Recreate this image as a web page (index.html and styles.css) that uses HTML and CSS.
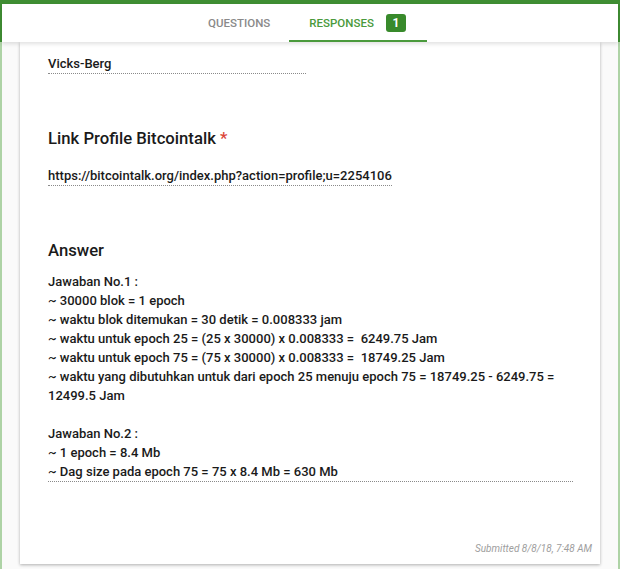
FILE: index.html
```html
<!DOCTYPE html>
<html lang="en">
<head>
  <meta charset="UTF-8" />
  <title>Responses</title>
  <link rel="stylesheet" href="styles.css">
</head>
<body>
  <div class="frame">
    <div class="topbar">
      <div class="tabs">
        <div class="tab">Questions</div>
        <div class="tab active">Responses <span class="badge">1</span></div>
      </div>
    </div>

    <div class="content">
      <div class="card">
        <div class="item first">
          <div class="answer">Vicks-Berg</div>
        </div>

        <div class="item">
          <h2>Link Profile Bitcointalk <span class="req">*</span></h2>
          <div class="answer">https://bitcointalk.org/index.php?action=profile;u=2254106</div>
        </div>

        <div class="item">
          <h2 class="tight">Answer</h2>
          <div class="answer long">Jawaban No.1 :<br>
~ 30000 blok = 1 epoch<br>
~ waktu blok ditemukan = 30 detik = 0.008333 jam<br>
~ waktu untuk epoch 25 = (25 x 30000) x 0.008333 = &nbsp;6249.75 Jam<br>
~ waktu untuk epoch 75 = (75 x 30000) x 0.008333 = &nbsp;18749.25 Jam<br>
~ waktu yang dibutuhkan untuk dari epoch 25 menuju epoch 75 = 18749.25 - 6249.75 = 12499.5 Jam<br>
<br>
Jawaban No.2 :<br>
~ 1 epoch = 8.4 Mb<br>
~ Dag size pada epoch 75 = 75 x 8.4 Mb = 630 Mb</div>
        </div>

        <div class="submitted">Submitted 8/8/18, 7:48 AM</div>
      </div>
    </div>
  </div>
</body>
</html>
```

FILE: styles.css
```css
* {
  box-sizing: border-box;
}
html, body {
  margin: 0;
  height: 100%;
}
body {
  font-family: Roboto, 'Liberation Sans', sans-serif;
  color: #1a1a1a;
  overflow: hidden;
}
.frame {
  height: 100%;
  display: flex;
  flex-direction: column;
  background: #fafafa;
  border-left: 2px solid #aed3a6;
  border-right: 2px solid #aed3a6;
}
.topbar {
  background: #3f8e33;
  padding: 4px 2px 0;
  margin: 0 -2px;
  position: relative;
  z-index: 2;
}
.tabs {
  background: #ffffff;
  height: 38px;
  display: flex;
  justify-content: center;
  box-shadow: 0 2px 4px rgba(0, 0, 0, 0.12);
  padding-right: 4px;
}
.tab {
  display: flex;
  align-items: center;
  padding: 2px 19px 0;
  font-size: 11.5px;
  font-weight: 500;
  text-transform: uppercase;
  color: #8a8a8a;
  border-bottom: 2px solid transparent;
}
.tab.active {
  color: #4a9a3c;
  border-bottom-color: #4a9a3c;
  padding: 2px 21px 0 20px;
}
.badge {
  display: inline-block;
  margin-left: 12px;
  background: #388a2b;
  color: #ffffff;
  font-size: 12px;
  font-weight: 700;
  width: 20px;
  height: 18px;
  line-height: 18px;
  text-align: center;
  border-radius: 3px;
}
.content {
  flex: 1;
  padding: 0 18px;
}
.card {
  background: #ffffff;
  box-shadow: 0 1px 3px rgba(0, 0, 0, 0.3);
  padding: 11px 27px 10px 28px;
  height: 522px;
  display: flex;
  flex-direction: column;
}
.item {
  margin-top: 53px;
}
.item.first {
  margin-top: 0;
}
h2 {
  margin: 0 0 14px;
  font-size: 16.7px;
  font-weight: 500;
  line-height: 24px;
}
h2.tight {
  margin-bottom: 9px;
}
.req {
  color: #db4437;
}
.answer {
  display: inline-block;
  font-size: 13px;
  font-weight: 500;
  line-height: 19px;
  border-bottom: 1px dotted #8a8a8a;
}
.item.first .answer {
  width: 258px;
}
.answer.long {
  display: block;
}
.submitted {
  margin-top: auto;
  text-align: right;
  font-size: 10px;
  font-style: italic;
  color: #9e9e9e;
  margin-right: -19px;
}
```
